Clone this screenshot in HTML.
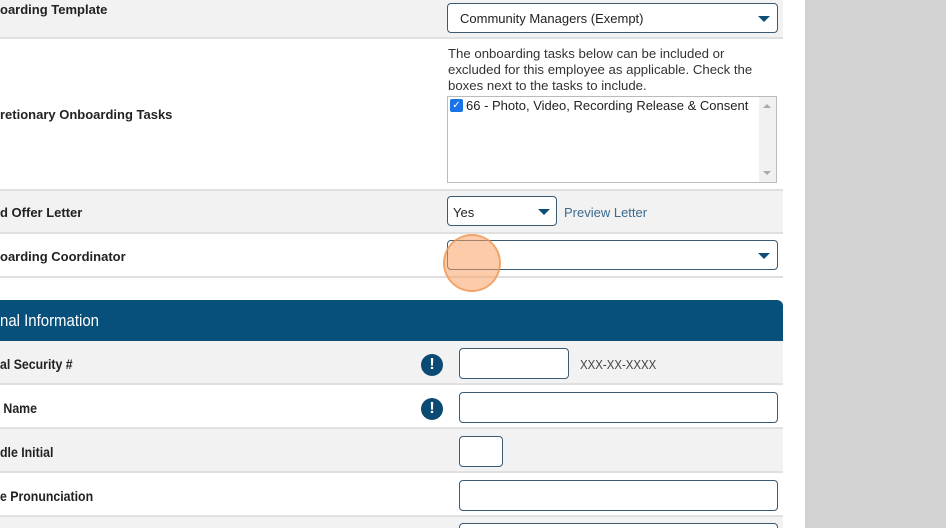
<!DOCTYPE html>
<html><head><style>
*{box-sizing:border-box;margin:0;padding:0}
html,body{width:946px;height:528px;overflow:hidden}
body{background:#fff;font-family:"Liberation Sans",sans-serif;position:relative}
.bg{position:absolute;left:805px;top:0;width:141px;height:528px;background:#d2d2d2}
.row{position:absolute;left:0;width:783px;border-bottom:2px solid #e0e0e0}
.g{background:#f2f2f2}
.lab{position:absolute;left:0;font-size:13px;font-weight:bold;color:#222;white-space:nowrap}
.n{transform:scaleX(.88);transform-origin:left;font-size:14px}
.box{position:absolute;background:#fff;border:1.5px solid #3d5a73;border-radius:4px}
.arr{position:absolute;width:0;height:0;border-left:6px solid transparent;border-right:6px solid transparent;border-top:6px solid #0e4d75}
.ex{position:absolute;width:22px;height:22px;border-radius:50%;background:#0b4a73;color:#fff;font-weight:bold;font-size:16px;text-align:center;line-height:22px}
</style></head><body>
<div class="bg"></div>
<div class="row g" style="top:0;height:39px"><div class="lab" style="top:2px">oarding Template</div></div>
<div class="box" style="left:447px;top:3px;width:331px;height:30px"><span style="position:absolute;left:12px;top:7px;font-size:13px;color:#222">Community Managers (Exempt)</span><div class="arr" style="left:310px;top:12px"></div></div>
<div class="row" style="top:39px;height:152px"><div class="lab" style="top:68px">retionary Onboarding Tasks</div>
<div style="position:absolute;left:448px;top:7px;width:315px;font-size:13.2px;line-height:16px;color:#333">The onboarding tasks below can be included or excluded for this employee as applicable. Check the boxes next to the tasks to include.</div>
<div style="position:absolute;left:447px;top:57px;width:330px;height:87px;border:1px solid #bbb;background:#fff">
<div style="position:absolute;left:2px;top:2px;width:13px;height:13px;background:#1a73e8;border-radius:2px;color:#fff;font-size:10px;line-height:13px;text-align:center">✓</div>
<span style="position:absolute;left:18px;top:1px;font-size:13px;color:#222">66 - Photo, Video, Recording Release &amp; Consent</span>
<div style="position:absolute;right:0;top:0;width:17px;height:85px;background:#f1f1f1"></div>
<div style="position:absolute;right:5px;top:7px;border-left:4px solid transparent;border-right:4px solid transparent;border-bottom:4px solid #aaa"></div>
<div style="position:absolute;right:5px;top:74px;border-left:4px solid transparent;border-right:4px solid transparent;border-top:4px solid #aaa"></div>
</div></div>
<div class="row g" style="top:191px;height:43px"><div class="lab" style="top:14px">d Offer Letter</div>
<div class="box" style="left:447px;top:5px;width:110px;height:30px"><span style="position:absolute;left:5px;top:8px;font-size:13px;color:#222">Yes</span><div class="arr" style="left:90px;top:12px"></div></div>
<span style="position:absolute;left:564px;top:14px;font-size:13px;color:#3c6a8e">Preview Letter</span></div>
<div class="row" style="top:234px;height:44px"><div class="lab" style="top:15px">oarding Coordinator</div>
<div class="box" style="left:447px;top:6px;width:331px;height:30px"><div class="arr" style="left:310px;top:12px"></div></div>
<div style="position:absolute;left:443px;top:0;width:58px;height:58px;border-radius:50%;background:rgba(247,160,100,.55);border:2px solid rgba(240,150,80,.7)"></div></div>
<div style="position:absolute;left:0;top:300px;width:783px;height:41px;background:#08507c;border-radius:0 6px 0 0;color:#fff"><span class="n" style="position:absolute;left:0;top:11px;font-size:17px;display:inline-block">nal Information</span></div>
<div class="row g" style="top:341px;height:44px"><div class="lab n" style="top:15px">al Security #</div><div class="ex" style="left:421px;top:13px">!</div>
<div class="box" style="left:459px;top:7px;width:110px;height:31px"></div><span class="n" style="position:absolute;left:580px;top:16px;font-size:13px;color:#444;display:inline-block">XXX-XX-XXXX</span></div>
<div class="row" style="top:385px;height:44px"><div class="lab n" style="top:15px">&nbsp;Name</div><div class="ex" style="left:421px;top:13px">!</div>
<div class="box" style="left:459px;top:7px;width:319px;height:31px"></div></div>
<div class="row g" style="top:429px;height:44px"><div class="lab n" style="top:15px">dle Initial</div>
<div class="box" style="left:459px;top:7px;width:44px;height:31px"></div></div>
<div class="row" style="top:473px;height:44px"><div class="lab n" style="top:15px">e Pronunciation</div>
<div class="box" style="left:459px;top:7px;width:319px;height:31px"></div></div>
<div class="g" style="position:absolute;left:0;top:517px;width:783px;height:11px"><div class="box" style="left:459px;top:6px;width:319px;height:31px"></div></div>
</body></html>
